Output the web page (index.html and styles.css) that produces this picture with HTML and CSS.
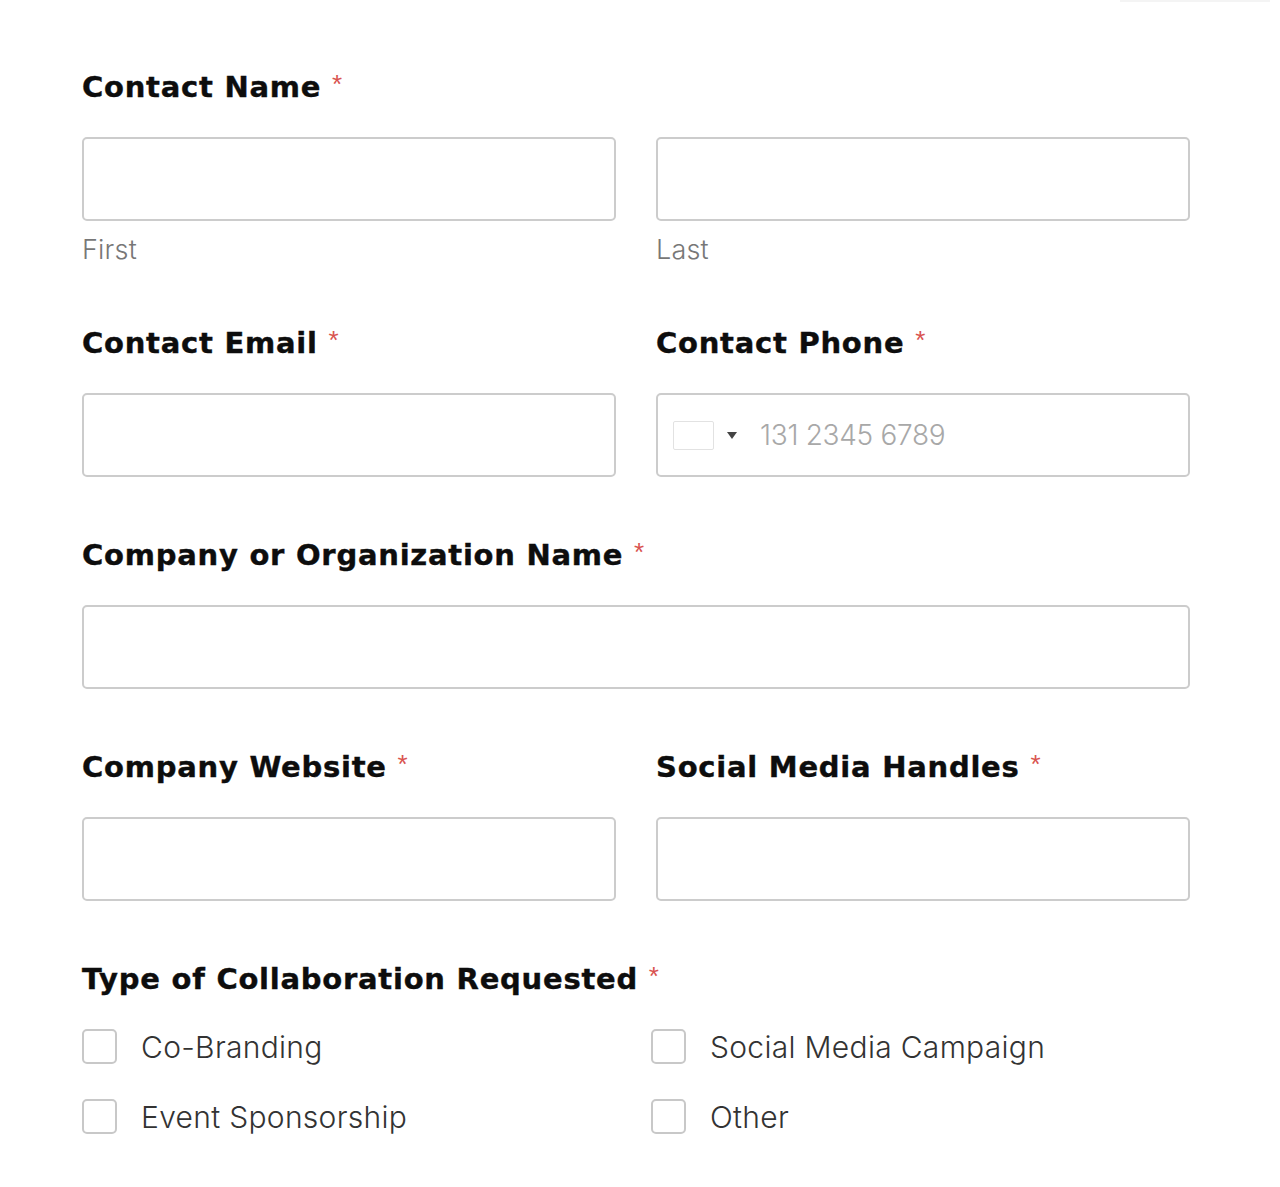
FILE: index.html
```html
<!DOCTYPE html>
<html>
<head>
<meta charset="utf-8">
<link rel="stylesheet" href="styles.css">
</head>
<body>
<div class="topline"></div>
<form class="form">
  <div class="field">
    <div class="label">Contact Name <span class="req">*</span></div>
    <div class="row2">
      <div>
        <div class="input"></div>
        <div class="sub">First</div>
      </div>
      <div>
        <div class="input"></div>
        <div class="sub">Last</div>
      </div>
    </div>
  </div>

  <div class="row2 field">
    <div>
      <div class="label">Contact Email <span class="req">*</span></div>
      <div class="input"></div>
    </div>
    <div>
      <div class="label">Contact Phone <span class="req">*</span></div>
      <div class="input phone">
        <span class="flag"></span>
        <span class="caret"></span>
        <span class="ph">131 2345 6789</span>
      </div>
    </div>
  </div>

  <div class="field">
    <div class="label">Company or Organization Name <span class="req">*</span></div>
    <div class="input"></div>
  </div>

  <div class="row2 field">
    <div>
      <div class="label">Company Website <span class="req">*</span></div>
      <div class="input"></div>
    </div>
    <div>
      <div class="label">Social Media Handles <span class="req">*</span></div>
      <div class="input"></div>
    </div>
  </div>

  <div class="field">
    <div class="label">Type of Collaboration Requested <span class="req">*</span></div>
    <div class="checks">
      <label class="check"><span class="box"></span>Co-Branding</label>
      <label class="check"><span class="box"></span>Social Media Campaign</label>
      <label class="check"><span class="box"></span>Event Sponsorship</label>
      <label class="check"><span class="box"></span>Other</label>
    </div>
  </div>
</form>
</body>
</html>
```

FILE: styles.css
```css
html, body {
  margin: 0;
  padding: 0;
  background: #fff;
}
body {
  font-family: Inter, "Noto Sans", sans-serif;
  color: #222;
}
.topline {
  position: absolute;
  top: 0;
  left: 1120px;
  width: 150px;
  height: 2px;
  background: #f4f4f4;
}
.form {
  width: 1108px;
  padding: 69px 0 0 82px;
}
.field {
  margin-bottom: 60px;
}
.label {
  font-family: "DejaVu Sans", sans-serif;
  font-weight: 700;
  font-size: 29px;
  line-height: 36px;
  height: 36px;
  color: #0d0d0d;
  -webkit-text-stroke: 0.4px #0d0d0d;
  letter-spacing: 0.75px;
  margin-bottom: 32px;
  white-space: nowrap;
}
.req {
  color: #d9534f;
  -webkit-text-stroke: 0;
  font-family: "Liberation Sans", sans-serif;
  font-weight: 400;
  font-size: 26px;
  position: relative;
  top: -4px;
}
.row2 {
  display: grid;
  grid-template-columns: 534px 534px;
  column-gap: 40px;
}
.input {
  box-sizing: border-box;
  height: 84px;
  border: 2px solid #cccccc;
  border-radius: 5px;
  background: #fff;
}
.sub {
  margin-top: 14px;
  font-size: 27px;
  line-height: 30px;
  font-weight: 300;
  color: #777;
  letter-spacing: 0.2px;
}
.phone {
  display: flex;
  align-items: center;
  padding-left: 15px;
}
.flag {
  box-sizing: border-box;
  width: 41px;
  height: 29px;
  border: 1px solid #e2e2e2;
  border-radius: 2px;
  background: #fff;
}
.caret {
  width: 0;
  height: 0;
  border-left: 5px solid transparent;
  border-right: 5px solid transparent;
  border-top: 7px solid #444;
  margin-left: 13px;
}
.ph {
  margin-left: 23px;
  font-size: 28px;
  font-weight: 300;
  color: #a8a8a8;
  letter-spacing: -0.3px;
}
.checks {
  display: grid;
  grid-template-columns: 569px 1fr;
  row-gap: 35px;
  margin-top: 3px;
}
.check {
  display: flex;
  align-items: center;
  height: 35px;
  font-size: 30px;
  font-weight: 300;
  color: #333;
  letter-spacing: 0.3px;
}
.box {
  box-sizing: border-box;
  width: 35px;
  height: 35px;
  border: 2px solid #c8c8c8;
  border-radius: 5px;
  margin-right: 24px;
  flex: none;
}
```
